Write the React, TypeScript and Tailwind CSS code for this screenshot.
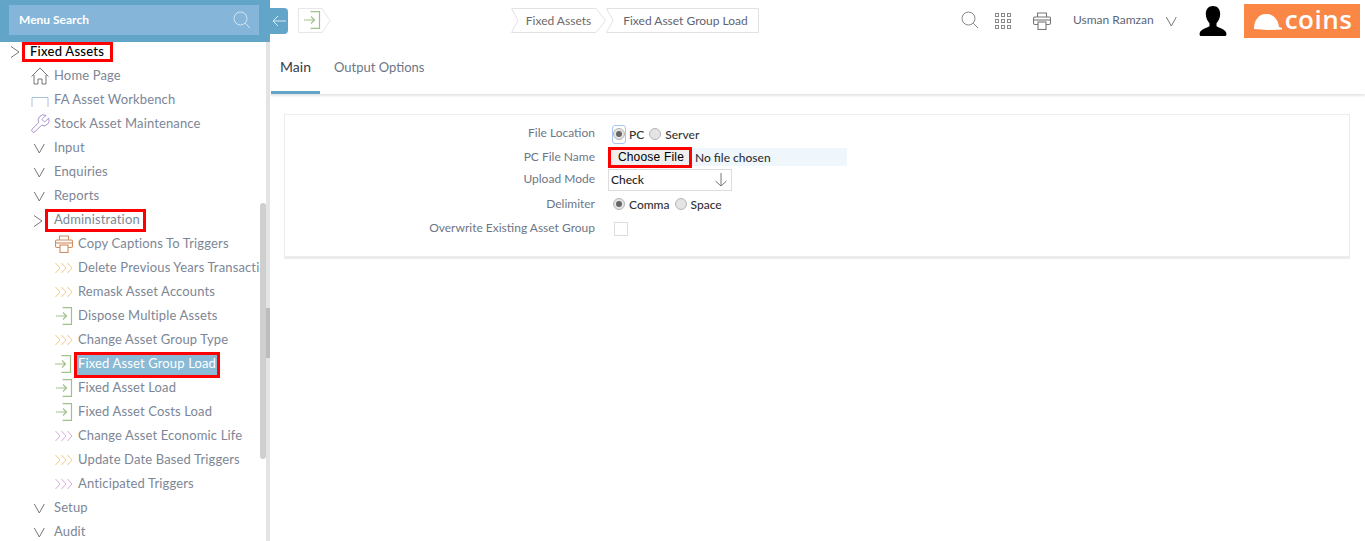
import React from "react";

const Chevron = ({ dir = "down", className = "" }: { dir?: "down" | "right"; className?: string }) => (
  <svg width="14" height="14" viewBox="0 0 14 14" fill="none" stroke="#777" strokeWidth="1" className={className}>
    {dir === "down" ? <path d="M1.300 3l5 9 5-9" /> : <path d="M3 2.500l8 5.500-8 5.500" />}
  </svg>
);

const Triple = ({ color }: { color: string }) => (
  <svg width="18" height="12" viewBox="0 0 18 12" fill="none" stroke={color} strokeWidth="1">
    <path d="M0.500 1l4.500 5-4.500 5M6.500 1l4.500 5-4.500 5M12.500 1l4.500 5-4.500 5" />
  </svg>
);

const LoadIcon = ({ size = 18 }: { size?: number }) => (
  <svg width={size} height={size} viewBox="0 0 18 18" fill="none" stroke="#a3c08b" strokeWidth="1.200">
    <path d="M7.500 0.600h9v16.800h-9" />
    <path d="M1 9h10.500M8 5.500L11.500 9 8 12.500" />
  </svg>
);

const PrintIcon = ({ color, size = 18 }: { color: string; size?: number }) => (
  <svg width={size} height={size} viewBox="0 0 18 18" fill="none" stroke={color} strokeWidth="1.100">
    <path d="M4.500 5V1h9v4" />
    <rect x="0.500" y="5" width="17" height="7.500" rx="1.500" />
    <path d="M1 8h16" />
    <rect x="5" y="10" width="8" height="7.500" fill="#fff" />
  </svg>
);

const Row = ({ icon, indent, children }: { icon: React.ReactNode; indent: number; children: React.ReactNode }) => (
  <div className="flex h-6 shrink-0 items-center whitespace-nowrap text-[13px] tracking-[0.14px] text-[#7d8696]">
    <div className="flex shrink-0 items-center justify-center" style={{ width: 24, marginLeft: indent }}>
      {icon}
    </div>
    {children}
  </div>
);

const Radio = ({ checked = false }: { checked?: boolean }) => (
  <span className="flex h-3 w-3 shrink-0 items-center justify-center rounded-full border border-[#b5b5b5] bg-[#e4e4e4]">
    {checked && <span className="h-1.5 w-1.5 rounded-full bg-[#666]" />}
  </span>
);

const Label = ({ children, low }: { children: React.ReactNode; low?: boolean }) => (
  <div className={low ? "w-[310px] shrink-0 text-right text-xs text-[#6e7686]" : "w-[310px] shrink-0 pb-0.5 text-right text-xs text-[#6e7686]"}>
    {children}
  </div>
);

const Crumb = ({ w, end, text, color }: { w: number; end?: boolean; text: string; color: string }) => (
  <div className="relative flex h-[25px] items-center justify-center text-xs" style={{ width: w, color }}>
    <svg width={w} height="25" viewBox={`0 0 ${w} 25`} fill="none" stroke="#e2e2e2" className="absolute left-0 top-0">
      {end ? (
        <path d={`M0.500 0.500H${w - 0.5}V24.500H0.500L7 12.500Z`} />
      ) : (
        <path d={`M0.500 0.500H${w - 10}L${w - 0.5} 12.500L${w - 10} 24.500H0.500L7 12.500Z`} />
      )}
    </svg>
    <span className={end ? "relative pl-1.5" : "relative"}>{text}</span>
  </div>
);

export default function App() {
  return (
    <div className="flex h-[541px] w-[1365px] overflow-hidden bg-white font-['Lato',sans-serif]">
      {/* Sidebar */}
      <aside className="relative flex h-full w-[270px] shrink-0 flex-col overflow-hidden">
        <div className="flex h-[42px] shrink-0 items-start bg-[#62a5c9] pl-[9px] pt-[5px]">
          <div className="flex h-[30px] w-[250px] items-center justify-between bg-[#85b5d8] pl-[10px] pr-2 text-xs font-bold text-white">
            <span>Menu Search</span>
            <svg width="18" height="18" viewBox="0 0 18 18" fill="none" stroke="#d4e5f1" strokeWidth="1">
              <circle cx="7.500" cy="7.500" r="6.500" />
              <path d="M12.300 12.300L17 17" />
            </svg>
          </div>
        </div>

        <div className="flex h-[22px] shrink-0 items-start pl-[8px]">
          <Chevron dir="right" className="mt-[2px]" />
          <div className="flex h-5 items-center border-[3px] border-[#ff0000] pl-[5px] pr-[6px] text-[13px] font-medium tracking-[0.25px] text-black">
            Fixed Assets
          </div>
        </div>

        <Row indent={28} icon={
          <svg width="18" height="18" viewBox="0 0 18 18" fill="none" stroke="#777" strokeWidth="1">
            <path d="M0.500 9.500L9 1l8.500 8.500" />
            <path d="M3 8v9h4v-5h4v5h4V8" />
          </svg>
        }>
          <span className="ml-[2px]">Home Page</span>
        </Row>
        <Row indent={28} icon={
          <svg width="18" height="10" viewBox="0 0 18 10" fill="none" stroke="#a9c2dc" strokeWidth="1" className="mt-[3px]">
            <path d="M1 10V0.500h16V10" />
          </svg>
        }>
          <span className="ml-[2px]">FA Asset Workbench</span>
        </Row>
        <Row indent={28} icon={
          <svg width="22" height="22" viewBox="0 0 24 24" fill="none" stroke="#a58ccb" strokeWidth="1.050">
            <path d="M14.700 6.300a1 1 0 0 0 0 1.400l1.600 1.600a1 1 0 0 0 1.400 0l3.770-3.770a6 6 0 0 1-7.940 7.940l-6.910 6.910a2.120 2.120 0 0 1-3-3l6.910-6.910a6 6 0 0 1 7.940-7.940l-3.760 3.760z" />
          </svg>
        }>
          <span className="ml-[2px]">Stock Asset Maintenance</span>
        </Row>
        {["Input", "Enquiries", "Reports"].map((t) => (
          <Row key={t} indent={28} icon={<Chevron />}>
            <span className="ml-[2px]">{t}</span>
          </Row>
        ))}

        <div className="flex h-6 shrink-0 items-center pl-[31px]">
          <Chevron dir="right" />
          <div className="flex h-[23px] items-center border-[3px] border-[#ff0000] pl-[6px] pr-[3px] text-[13px] tracking-[0.14px] text-[#7d8696]">
            Administration
          </div>
        </div>

        <Row indent={52} icon={<PrintIcon color="#d58a5e" />}>
          <span className="ml-[2px]">Copy Captions To Triggers</span>
        </Row>
        <Row indent={52} icon={<Triple color="#f5c987" />}>
          <span className="ml-[2px] w-[184px] overflow-hidden">Delete Previous Years Transactions</span>
        </Row>
        <Row indent={52} icon={<Triple color="#f5c987" />}>
          <span className="ml-[2px]">Remask Asset Accounts</span>
        </Row>
        <Row indent={52} icon={<LoadIcon />}>
          <span className="ml-[2px]">Dispose Multiple Assets</span>
        </Row>
        <Row indent={52} icon={<Triple color="#f5c987" />}>
          <span className="ml-[2px]">Change Asset Group Type</span>
        </Row>
        <div className="flex h-6 shrink-0 items-start pl-[52px]">
          <div className="flex h-6 w-[22px] items-center justify-center">
            <LoadIcon />
          </div>
          <div className="flex h-[26px] items-center border-[3px] border-[#ff0000] bg-[#89bad6] px-px pb-0.5 text-[13px] tracking-[0.14px] text-white">
            Fixed Asset Group Load
          </div>
        </div>
        <Row indent={52} icon={<LoadIcon />}>
          <span className="ml-[2px]">Fixed Asset Load</span>
        </Row>
        <Row indent={52} icon={<LoadIcon />}>
          <span className="ml-[2px]">Fixed Asset Costs Load</span>
        </Row>
        <Row indent={52} icon={<Triple color="#dcaae6" />}>
          <span className="ml-[2px]">Change Asset Economic Life</span>
        </Row>
        <Row indent={52} icon={<Triple color="#f5c987" />}>
          <span className="ml-[2px]">Update Date Based Triggers</span>
        </Row>
        <Row indent={52} icon={<Triple color="#dcaae6" />}>
          <span className="ml-[2px]">Anticipated Triggers</span>
        </Row>
        {["Setup", "Audit"].map((t) => (
          <Row key={t} indent={28} icon={<Chevron />}>
            <span className="ml-[2px]">{t}</span>
          </Row>
        ))}

        {/* scrollbars over the list */}
        <div className="absolute bottom-0 right-0 top-[42px] w-1 bg-[#e4e4e4]" />
        <div className="absolute right-0 top-[308px] h-[50px] w-1 bg-[#bdbdbd]" />
        <div className="absolute right-1 top-[203px] h-[256px] w-1.5 rounded-full bg-[#cfcfcf]" />
      </aside>

      {/* Main */}
      <main className="flex min-w-0 flex-1 flex-col">
        <header className="flex h-[42px] shrink-0 items-start">
          <div className="mt-2 flex h-[26px] w-[18px] items-center justify-center rounded-r bg-[#62a5c9]">
            <svg width="14" height="12" viewBox="0 0 14 12" fill="none" stroke="#dcebf3" strokeWidth="1">
              <path d="M14 6H1M6 1L1 6l5 5" />
            </svg>
          </div>
          <div className="relative ml-[10px] mt-2 h-[25px] w-[32px]">
            <svg width="33" height="25" viewBox="0 0 33 25" fill="none" stroke="#e6e6e6" className="absolute left-0 top-0">
              <path d="M0.500 0.500H24L32 12.500L24 24.500H0.500Z" />
            </svg>
            <div className="absolute left-[5px] top-[3px]">
              <LoadIcon />
            </div>
          </div>
          <div className="ml-[181px] mt-2 flex">
            <Crumb w={95} text="Fixed Assets" color="#6f6a66" />
            <Crumb w={153} end text="Fixed Asset Group Load" color="#5f6470" />
          </div>
          <div className="ml-[202px] flex h-[42px] items-start">
            <svg width="18" height="18" viewBox="0 0 18 18" fill="none" stroke="#888" strokeWidth="1" className="mt-[11px]">
              <circle cx="7.500" cy="7.500" r="6.500" />
              <path d="M12.300 12.300L17 17" />
            </svg>
            <div className="ml-[16px] mt-[13px] grid grid-cols-3 gap-[2px]">
              {Array.from({ length: 9 }).map((_, i) => (
                <span key={i} className="h-[4px] w-[4px] border border-[#888]" />
              ))}
            </div>
            <div className="ml-[22px] mt-[12px]">
              <PrintIcon color="#777" />
            </div>
            <span className="ml-[22px] mt-[12px] whitespace-nowrap text-xs text-[#5c6675]">Usman Ramzan</span>
            <Chevron className="ml-[11px] mt-[14px]" />
            <svg width="28" height="30" viewBox="0 0 28 30" fill="#000" className="ml-[20px] mt-[6px]">
              <path d="M14 0c4.600 0 7.200 3.400 7.200 8 0 4-1.900 7.300-3.700 9.300v3c2.400 1.600 8.600 3 9.800 6.600.3 1 .1 2.600-.8 3.100H1.500c-.9-.5-1.100-2.100-.8-3.100C1.900 23.300 8.100 21.900 10.500 20.300v-3C8.700 15.300 6.800 12 6.800 8 6.800 3.400 9.400 0 14 0z" />
            </svg>
            <div className="ml-[17px] mt-1 flex h-[34px] w-[116px] items-center gap-[3px] bg-[#fb8747] pl-[9px] text-white">
              <svg width="29" height="17" viewBox="0 0 29 17" fill="#fff">
                <path d="M1 16C1 7 6 1 13 1c7 0 12 5 13 13l3 1v1.500L15 17z" />
              </svg>
              <span className="-mt-[5px] font-['Open_Sans',sans-serif] text-[26px] font-semibold leading-none tracking-[0.5px]">coins</span>
            </div>
          </div>
        </header>

        <nav className="flex h-[52px] shrink-0 items-stretch pl-px shadow-[0_2px_2px_rgba(0,0,0,0.1)]">
          <div className="flex w-[49px] items-center justify-center border-b-[3px] border-[#62a5c9] text-sm text-[#333c4b]">Main</div>
          <div className="ml-[14px] flex items-center text-[13px] text-[#6e7686]">Output Options</div>
        </nav>

        <section className="ml-[14px] mt-[20px] h-[145px] w-[1066px] border border-b-[3px] border-[#ececec] pt-[7px]">
          <div className="flex h-6 items-center">
            <Label>File Location</Label>
            <div className="ml-[13px] flex items-center text-xs text-[#333]">
              <span className="ml-[4px] flex h-[19px] w-[14px] items-center justify-center rounded-[3px] border border-[#a8c7f0]">
                <Radio checked />
              </span>
              <span className="ml-[3px] mt-[2px] font-medium">PC</span>
              <span className="ml-[5px]"><Radio /></span>
              <span className="ml-[4px] mt-[2px] font-medium">Server</span>
            </div>
          </div>
          <div className="flex h-[22px] items-center">
            <Label low>PC File Name</Label>
            <div className="ml-[13px] flex h-[18px] w-[239px] items-center bg-[#eff7fd] text-xs text-[#333]">
              <div className="flex h-[21px] w-[84px] items-center justify-center border-[3px] border-[#ff0000] bg-[#efefef] pl-0.5 font-['Liberation_Sans',sans-serif] text-xs tracking-[0.2px] text-black">
                Choose File
              </div>
              <span className="ml-[3px] mt-[2px] font-medium">No file chosen</span>
            </div>
          </div>
          <div className="flex h-[23px] items-center">
            <Label>Upload Mode</Label>
            <div className="ml-[13px] flex h-[22px] w-[124px] items-center justify-between border border-[#dcdcdc] pl-[2px] pr-[3px] text-xs font-medium text-[#222]">
              Check
              <svg width="14" height="14" viewBox="0 0 14 14" fill="none" stroke="#777" strokeWidth="1">
                <path d="M7 0v13M1.500 8L7 13l5.500-5" />
              </svg>
            </div>
          </div>
          <div className="flex h-[26px] items-center">
            <Label low>Delimiter</Label>
            <div className="ml-[18px] flex items-center text-xs font-medium text-[#333]">
              <Radio checked />
              <span className="ml-[4px] mt-[2px]">Comma</span>
              <span className="ml-[5px]"><Radio /></span>
              <span className="ml-[4px] mt-[2px]">Space</span>
            </div>
          </div>
          <div className="flex h-6 items-center">
            <Label>Overwrite Existing Asset Group</Label>
            <span className="ml-[19px] h-[14px] w-[14px] border border-[#dcdcdc]" />
          </div>
        </section>
      </main>
    </div>
  );
}
